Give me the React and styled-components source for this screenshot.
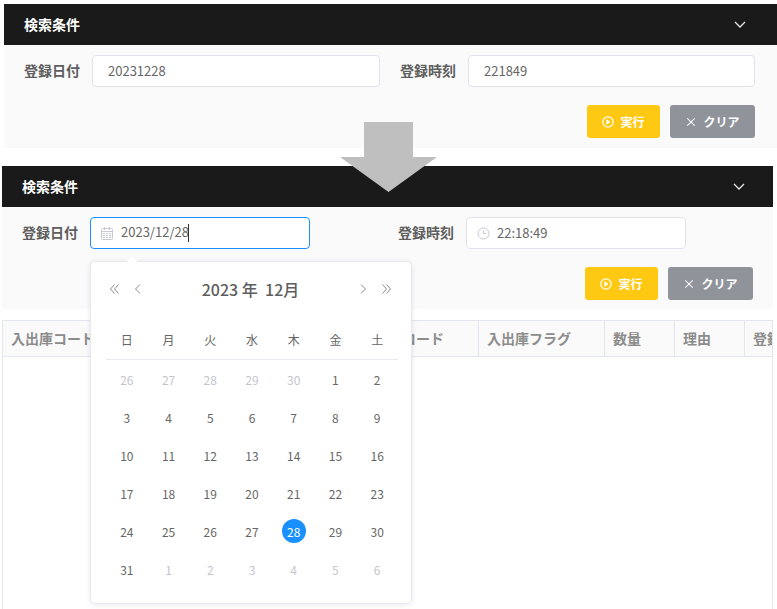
import React from 'react'
import styled, { createGlobalStyle } from 'styled-components'
import { AiOutlineClose } from 'react-icons/ai'

const GlobalStyle = createGlobalStyle`
  html, body {
    margin: 0;
    padding: 0;
    background: #fff;
    overflow: hidden;
  }
  body {
    font-family: "Noto Sans CJK JP", "Noto Sans", sans-serif;
  }
`

const Page = styled.div`
  position: relative;
  width: 777px;
  height: 609px;
  overflow: hidden;
  padding-top: 4px;
  box-sizing: border-box;
`

const Panel = styled.section`
  width: ${(p) => p.$width}px;
  margin-left: ${(p) => p.$left}px;
  margin-top: ${(p) => p.$top}px;
  background: #fafafa;
`

const PanelHeader = styled.header`
  display: flex;
  align-items: center;
  justify-content: space-between;
  height: 41px;
  padding: 0 ${(p) => p.$right}px 0 20px;
  background: #1a1a1a;
  color: #fff;
  font-size: 14px;
  font-weight: 700;
`

const PanelTitle = styled.h2`
  margin: 0 0 2px;
  font-size: inherit;
  font-weight: inherit;
`

const FormRow = styled.div`
  display: grid;
  grid-template-columns: 376px 1fr;
  padding: 10px 0 0 20px;
`

const Field = styled.div`
  display: flex;
  align-items: center;
  gap: 12px;
`

const Label = styled.label`
  width: 56px;
  flex: none;
  margin-bottom: 2px;
  font-size: 14px;
  font-weight: 700;
  line-height: 20px;
  color: #5e5e5e;
  white-space: nowrap;
`

const InputBox = styled.div`
  display: flex;
  align-items: center;
  gap: 7px;
  box-sizing: border-box;
  width: ${(p) => p.$width}px;
  height: 32px;
  padding: 0 ${(p) => (p.$icon ? 10 : 15)}px;
  background: #fff;
  border: 1px solid ${(p) => (p.$focus ? '#1890ff' : '#e1e1ec')};
  border-radius: 4px;
  font-size: 13px;
  color: #666;
  svg {
    flex: none;
  }
`

const InputText = styled.span`
  margin-bottom: 2px;
`

const Caret = styled.span`
  display: inline-block;
  width: 1px;
  height: 18px;
  margin-left: -1px;
  vertical-align: middle;
  background: #333;
`

const Actions = styled.div`
  display: flex;
  justify-content: flex-end;
  gap: 10px;
  padding: 18px ${(p) => p.$right}px ${(p) => p.$bottom}px 0;
`

const Button = styled.button`
  display: flex;
  align-items: center;
  justify-content: center;
  gap: 6px;
  width: ${(p) => p.$width}px;
  height: 33px;
  padding: 0;
  border: none;
  border-radius: 3px;
  background: ${(p) => p.$bg};
  color: #fff;
  font-family: inherit;
  font-size: 12px;
  font-weight: 700;
  svg {
    font-size: 12px;
  }
`

const Table = styled.div`
  display: grid;
  grid-template-columns: 363px 113px 126px 70px 70px 70px;
  grid-auto-rows: 36px;
  width: 771px;
  height: 300px;
  margin: 11px 0 0 2px;
  box-sizing: border-box;
  border: 1px solid #e3e6ef;
  border-bottom: none;
  overflow: hidden;
`

const HeadCell = styled.div`
  display: flex;
  align-items: center;
  padding: 0 0 2px 8px;
  background: #fafafa;
  border-right: 1px solid #e3e6ef;
  border-bottom: 1px solid #e3e6ef;
  font-size: 14px;
  font-weight: 700;
  color: #8c8c8c;
  white-space: nowrap;
  overflow: hidden;
`

const Arrow = styled.svg`
  position: absolute;
  left: 340px;
  top: 122px;
  width: 97px;
  height: 70px;
  fill: #bfbfbf;
`

const Popover = styled.div`
  position: absolute;
  left: 91px;
  top: 262px;
  width: 320px;
  height: 341px;
  box-sizing: border-box;
  padding: 0 13px 0 15px;
  background: #fff;
  border-radius: 4px;
  box-shadow: 0 0 0 1px #e8e8f1, 0 1px 6px rgba(90, 95, 130, 0.18);
  color: #666;
  &::before {
    content: '';
    position: absolute;
    left: 37px;
    top: -4px;
    width: 8px;
    height: 8px;
    background: #fff;
    transform: rotate(45deg);
  }
`

const CalendarHeader = styled.div`
  display: flex;
  align-items: center;
  height: 54px;
  padding: 0 7px 0 4px;
  color: #8a8a8a;
`

const NavGroup = styled.div`
  display: flex;
  align-items: center;
  gap: 14px;
  width: 40px;
  flex-direction: ${(p) => (p.$end ? 'row-reverse' : 'row')};
`

const CalendarTitle = styled.div`
  flex: 1;
  text-align: center;
  font-size: 16px;
  font-weight: 500;
  color: #5e5e5e;
  white-space: pre;
`

const WeekRow = styled.div`
  display: grid;
  grid-template-columns: repeat(7, 1fr);
  align-items: center;
  height: 44px;
  padding-top: 4px;
  box-sizing: border-box;
  border-bottom: 1px solid #e8e8f0;
  font-size: 12px;
  color: #666;
  text-align: center;
`

const DateRows = styled.div`
  display: grid;
  grid-template-columns: repeat(7, 1fr);
  grid-auto-rows: 38px;
`

const DateCell = styled.div`
  display: flex;
  align-items: center;
  justify-content: center;
  font-size: 12px;
  color: ${(p) => (p.$muted ? '#c4c5cc' : '#666')};
`

const Today = styled.span`
  display: flex;
  align-items: center;
  justify-content: center;
  width: 24px;
  height: 24px;
  border-radius: 50%;
  background: #1890ff;
  color: #fff;
`

const weekDays = ['日', '月', '火', '水', '木', '金', '土']
const lastMonth = [26, 27, 28, 29, 30]
const nextMonth = [1, 2, 3, 4, 5, 6]
const thisMonth = Array.from({ length: 31 }, (_, i) => i + 1)

const columns = ['入出庫コード', '品目コード', '入出庫フラグ', '数量', '理由', '登録日時']

const Chevron = () => (
  <svg width="12" height="7" viewBox="0 0 12 7" fill="none" stroke="#e6e6e6" strokeWidth="1.3">
    <path d="M1 1l5 5 5-5" />
  </svg>
)

const CalendarIcon = () => (
  <svg width="13" height="13" viewBox="0 0 13 13" fill="none" stroke="#c6c8d2" strokeWidth="1">
    <rect x="0.5" y="1.5" width="11" height="11" rx="1" />
    <path d="M0.5 4.5h11M3.5 0v3M8.5 0v3" />
    <path d="M2 6.5h8M2 8.5h8M2 10.5h8" strokeDasharray="2 1" />
  </svg>
)

const ClockIcon = () => (
  <svg width="13" height="13" viewBox="0 0 13 13" fill="none" stroke="#c6c8d2" strokeWidth="1">
    <circle cx="6.5" cy="6.5" r="5.5" />
    <path d="M6.5 3v3.5h3" />
  </svg>
)

const PlayIcon = () => (
  <svg width="12" height="12" viewBox="0 0 12 12" fill="none" stroke="#fff" strokeWidth="1.2">
    <circle cx="6" cy="6" r="5.2" />
    <path d="M4.8 3.8v4.4L8 6z" fill="#fff" strokeWidth="0.8" />
  </svg>
)

const NavIcon = ({ double, right }) => (
  <svg
    width="10"
    height="10"
    viewBox="0 0 10 10"
    fill="none"
    stroke="#8a8a8a"
    strokeWidth="1"
    style={right ? { transform: 'scaleX(-1)' } : undefined}
  >
    <path d={double ? 'M4.5 0.5L0.5 5l4 4.5M8.5 0.5L4.5 5l4 4.5' : 'M6 0.5L1.5 5 6 9.5'} />
  </svg>
)

const SearchActions = ({ right, bottom }) => (
  <Actions $right={right} $bottom={bottom}>
    <Button $width={73} $bg="#ffc813">
      <PlayIcon />
      実行
    </Button>
    <Button $width={85} $bg="#91939b">
      <AiOutlineClose />
      クリア
    </Button>
  </Actions>
)

const Calendar = () => (
  <Popover>
    <CalendarHeader>
      <NavGroup>
        <NavIcon double />
        <NavIcon />
      </NavGroup>
      <CalendarTitle>2023 年  12月</CalendarTitle>
      <NavGroup $end>
        <NavIcon double right />
        <NavIcon right />
      </NavGroup>
    </CalendarHeader>
    <WeekRow>
      {weekDays.map((d) => (
        <span key={d}>{d}</span>
      ))}
    </WeekRow>
    <DateRows>
      {lastMonth.map((d) => (
        <DateCell key={`prev-${d}`} $muted>{d}</DateCell>
      ))}
      {thisMonth.map((d) => (
        <DateCell key={d}>{d === 28 ? <Today>{d}</Today> : d}</DateCell>
      ))}
      {nextMonth.map((d) => (
        <DateCell key={`next-${d}`} $muted>{d}</DateCell>
      ))}
    </DateRows>
  </Popover>
)

const App = () => {
  return (
    <Page>
      <GlobalStyle />
      <Panel $width={773} $left={4} $top={0}>
        <PanelHeader $right={31}>
          <PanelTitle>検索条件</PanelTitle>
          <Chevron />
        </PanelHeader>
        <FormRow>
          <Field>
            <Label>登録日付</Label>
            <InputBox $width={288}><InputText>20231228</InputText></InputBox>
          </Field>
          <Field>
            <Label>登録時刻</Label>
            <InputBox $width={287}><InputText>221849</InputText></InputBox>
          </Field>
        </FormRow>
        <SearchActions right={22} bottom={10} />
      </Panel>
      <Panel $width={771} $left={2} $top={18}>
        <PanelHeader $right={28}>
          <PanelTitle>検索条件</PanelTitle>
          <Chevron />
        </PanelHeader>
        <FormRow>
          <Field>
            <Label>登録日付</Label>
            <InputBox $width={220} $icon $focus>
              <CalendarIcon />
              <InputText>2023/12/28<Caret /></InputText>
            </InputBox>
          </Field>
          <Field>
            <Label>登録時刻</Label>
            <InputBox $width={220} $icon>
              <ClockIcon />
              <InputText>22:18:49</InputText>
            </InputBox>
          </Field>
        </FormRow>
        <SearchActions right={20} bottom={9} />
      </Panel>
      <Table>
        {columns.map((c) => (
          <HeadCell key={c}>{c}</HeadCell>
        ))}
      </Table>
      <Arrow viewBox="0 0 97 70">
        <polygon points="24,0 73,0 73,35 97,35 48.5,70 0,35 24,35" />
      </Arrow>
      <Calendar />
    </Page>
  )
}

export default App
